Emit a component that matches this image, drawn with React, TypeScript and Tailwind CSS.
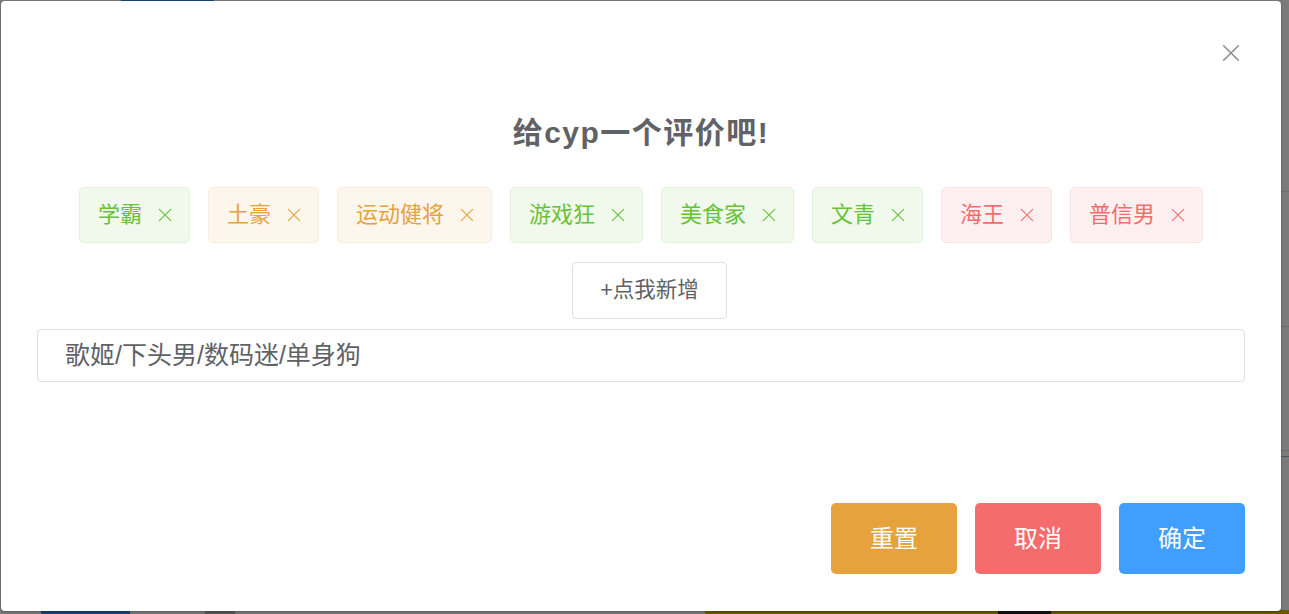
import React from "react";

type TagKind = "success" | "warning" | "danger";

const tags: { label: string; kind: TagKind }[] = [
  { label: "学霸", kind: "success" },
  { label: "土豪", kind: "warning" },
  { label: "运动健将", kind: "warning" },
  { label: "游戏狂", kind: "success" },
  { label: "美食家", kind: "success" },
  { label: "文青", kind: "success" },
  { label: "海王", kind: "danger" },
  { label: "普信男", kind: "danger" },
];

const tagClass: Record<TagKind, string> = {
  success: "bg-[#f0f9eb] border-[#e1f3d8] text-[#67c23a]",
  warning: "bg-[#fdf6ec] border-[#faecd8] text-[#e6a23c]",
  danger: "bg-[#fef0f0] border-[#fde2e2] text-[#f56c6c]",
};

function XIcon({ size, className, sw = 1.3 }: { size: number; className?: string; sw?: number }) {
  return (
    <svg
      width={size}
      height={size}
      viewBox="0 0 16 16"
      className={className}
      fill="none"
      stroke="currentColor"
      strokeWidth={sw}
      strokeLinecap="round"
    >
      <path d="M1.5 1.5 L14.5 14.5 M14.5 1.5 L1.5 14.5" />
    </svg>
  );
}

export default function App() {
  const font = {
    fontFamily: '"Liberation Sans", "Noto Sans CJK SC", sans-serif',
  };
  return (
    <div
      className="relative w-[1289px] h-[614px] overflow-hidden bg-[#7b7b7b] pt-[1px] pl-[1px]"
      style={font}
    >
      {/* dimmed page fragments behind the overlay */}
      <div className="absolute left-[121px] top-0 w-[93px] h-[2px] bg-[#1d4470]" />
      <div className="absolute right-0 top-[191px] w-[8px] h-[1px] bg-[#6c6c6c]" />
      <div className="absolute right-0 top-[326px] w-[8px] h-[1px] bg-[#6c6c6c]" />
      <div className="absolute right-0 top-[450px] w-[8px] h-[1px] bg-[#6c6c6c]" />
      <div className="absolute right-0 top-[456px] w-[8px] h-[1px] bg-[#4d5661]" />
      <div className="absolute left-[41px] bottom-0 w-[89px] h-[3px] bg-[#1b4572]" />
      <div className="absolute left-[205px] bottom-0 w-[30px] h-[3px] bg-[#5a5a5a]" />
      <div className="absolute left-[705px] bottom-0 w-[584px] h-[4px] bg-[#6b5900]" />
      <div className="absolute left-[998px] bottom-0 w-[53px] h-[3px] bg-[#141010]" />

      <div className="relative z-10 w-[1280px] h-[610px] bg-white rounded-[4px] flex flex-col shadow-[0_1px_3px_rgba(0,0,0,0.3)]">
        <div className="flex justify-end pt-[43px] pr-[41px]">
          <XIcon size={18} sw={1.4} className="text-[#8c8e94]" />
        </div>

        <h2 className="mt-[51px] text-center text-[30px] leading-[40px] font-bold text-[#606266] tracking-[1.5px]">
          给cyp一个评价吧!
        </h2>

        <div className="mt-[34px] flex justify-center gap-[18px]">
          {tags.map((t) => (
            <div
              key={t.label}
              className={`h-[56px] pl-[18px] pr-[17px] border rounded-[5px] flex items-center ${tagClass[t.kind]}`}
            >
              <span className="text-[22px] leading-none">{t.label}</span>
              <XIcon size={14} className="ml-[16px]" />
            </div>
          ))}
        </div>

        <div className="mt-[19px] flex justify-center pl-[17px]">
          <button className="w-[155px] h-[57px] border border-[#dcdfe6] rounded-[4px] bg-white text-[#606266] text-[21.5px]">
            +点我新增
          </button>
        </div>

        <div className="mt-[10px] px-[36px]">
          <div className="h-[53px] border border-[#dcdfe6] rounded-[4px] flex items-center pl-[27px] text-[25px] text-[#606266]">
            歌姬/下头男/数码迷/单身狗
          </div>
        </div>

        <div className="mt-[121px] px-[36px] flex justify-end gap-[18px]">
          <button className="w-[126px] h-[71px] rounded-[5px] bg-[#e6a23c] text-white text-[24px]">
            重置
          </button>
          <button className="w-[126px] h-[71px] rounded-[5px] bg-[#f56c6c] text-white text-[24px]">
            取消
          </button>
          <button className="w-[126px] h-[71px] rounded-[5px] bg-[#409eff] text-white text-[24px]">
            确定
          </button>
        </div>
      </div>
    </div>
  );
}
